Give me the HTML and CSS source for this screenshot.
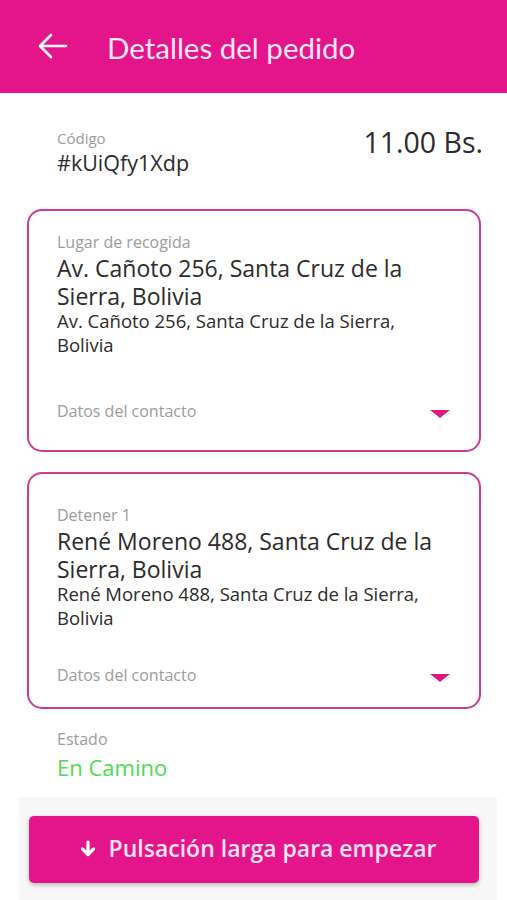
FILE: index.html
```html
<!DOCTYPE html>
<html lang="es">
<head>
<meta charset="utf-8">
<title>Detalles del pedido</title>
<link rel="stylesheet" href="styles.css">
</head>
<body>
<div class="screen">
  <header class="appbar">
    <svg class="back" width="30" height="26" viewBox="0 0 30 26" aria-hidden="true">
      <path d="M28 13H3M13 2L2 13l11 11" fill="none" stroke="#fff" stroke-width="2.6" stroke-linecap="round" stroke-linejoin="round"/>
    </svg>
    <h1 class="title">Detalles del pedido</h1>
  </header>

  <main class="content">
    <section class="code-row">
      <div class="code">
        <div class="label label-code">Código</div>
        <div class="code-value">#kUiQfy1Xdp</div>
      </div>
      <div class="price">11.00 Bs.</div>
    </section>

    <section class="card card-pickup">
      <div class="label">Lugar de recogida</div>
      <div class="addr-main">Av. Cañoto 256, Santa Cruz de la Sierra, Bolivia</div>
      <div class="addr-sub">Av. Cañoto 256, Santa Cruz de la Sierra, Bolivia</div>
      <div class="contact">
        <span class="label">Datos del contacto</span>
        <span class="caret"></span>
      </div>
    </section>

    <section class="card card-stop">
      <div class="label">Detener 1</div>
      <div class="addr-main">René Moreno 488, Santa Cruz de la Sierra, Bolivia</div>
      <div class="addr-sub">René Moreno 488, Santa Cruz de la Sierra, Bolivia</div>
      <div class="contact">
        <span class="label">Datos del contacto</span>
        <span class="caret"></span>
      </div>
    </section>

    <section class="status">
      <div class="label">Estado</div>
      <div class="status-value">En Camino</div>
    </section>
  </main>

  <footer class="bottom">
    <button class="start" type="button">
      <svg class="down" width="16" height="18" viewBox="0 0 16 18" aria-hidden="true">
        <path d="M8 2v12M2.5 9L8 14.5 13.5 9" fill="none" stroke="#fff" stroke-width="3.2" stroke-linecap="round" stroke-linejoin="round"/>
      </svg>
      <span>Pulsación larga para empezar</span>
    </button>
  </footer>
</div>
</body>
</html>
```

FILE: styles.css
```css
* { box-sizing: border-box; }
html, body { margin: 0; padding: 0; background: #fff; }
body {
  font-family: "Open Sans", "Noto Sans", "Liberation Sans", sans-serif;
  color: #2b2b2b;
  width: 507px;
  height: 900px;
  overflow: hidden;
}
.screen { display: flex; flex-direction: column; height: 900px; }

.appbar {
  height: 93px;
  background: #e4148a;
  display: flex;
  align-items: center;
  padding-left: 38px;
  gap: 39px;
  flex: none;
}
.back { display: block; margin-top: -2px; }
.title {
  margin: 0;
  font-family: Lato, "Open Sans", sans-serif;
  font-weight: 400;
  font-size: 29.5px;
  color: #fde7f3;
  margin-top: 2px;
}

.content {
  flex: 1;
  padding: 0 26px 0 27px;
}

.label {
  font-size: 16px;
  line-height: 20px;
  color: #9b9b9b;
}
.label-code { font-size: 15px; }

.code-row {
  display: flex;
  justify-content: space-between;
  align-items: flex-start;
  padding: 35px 0 0 30px;
  height: 116px;
}
.code-value { font-size: 21.5px; line-height: 30px; color: #2b2b2b; }
.price { font-size: 28.5px; line-height: 34px; margin-top: -3px; color: #2b2b2b; margin-right: -2px; }

.card {
  border: 2px solid #cf3a93;
  border-radius: 15px;
  padding: 21px 38px 29px 28px;
  margin-bottom: 20px;
}
.card-stop { padding-top: 31px; padding-bottom: 22px; }
.addr-main {
  font-size: 23px;
  line-height: 28px;
  color: #2b2b2b;
  margin-top: 2px;
}
.addr-sub {
  font-size: 18.5px;
  line-height: 24px;
  color: #2b2b2b;
  margin-top: -1px;
}
.contact {
  display: flex;
  justify-content: space-between;
  align-items: center;
  margin-top: 44px;
  margin-right: -10px;
}
.card-stop .contact { margin-top: 35px; }
.caret {
  width: 0; height: 0;
  border-left: 10px solid transparent;
  border-right: 10px solid transparent;
  border-top: 8px solid #e0197f;
  margin-right: 1px;
  margin-top: 6px;
}

.status { padding: 0 0 0 30px; margin-top: 1px; }
.status-value { font-size: 22px; line-height: 32px; color: #4cdb4f; margin-top: 2px; }

.bottom {
  flex: none;
  margin: 0 10px 0 19px;
  background: #f7f7f7;
  height: 103px;
  padding: 19px 18px 0 10px;
}
.start {
  width: 100%;
  height: 67px;
  border: none;
  border-radius: 5px;
  background: #e4148a;
  box-shadow: 0 2px 4px rgba(0,0,0,0.25);
  color: #fbe3f1;
  font-family: "Open Sans", "Noto Sans", sans-serif;
  font-weight: 600;
  font-size: 23px;
  display: flex;
  align-items: center;
  justify-content: center;
  gap: 13px;
  padding: 0 0 4px 8px;
}
.down { display: block; margin-top: 3px; }
```
